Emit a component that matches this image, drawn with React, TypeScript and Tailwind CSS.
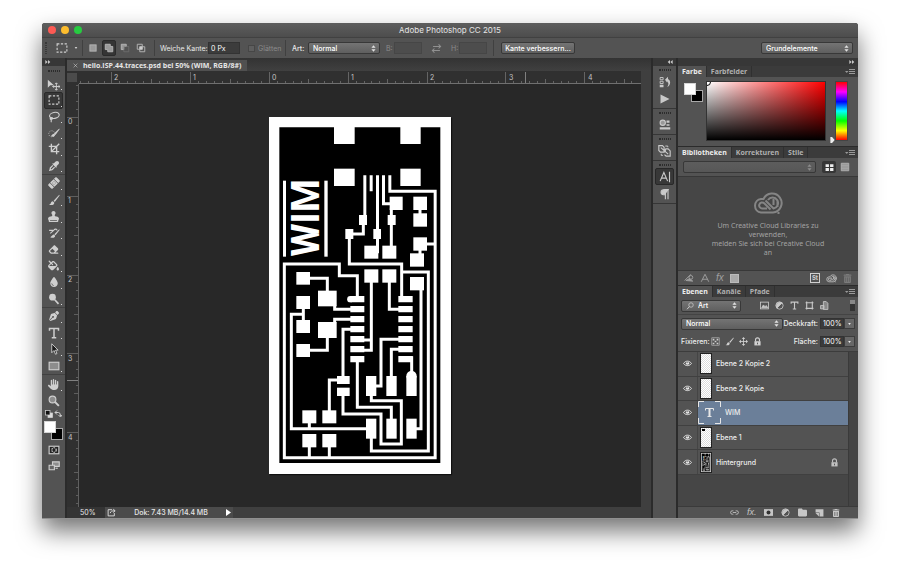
import { ReactNode, useId } from 'react';
import {
    FaBandage,
    FaDroplet,
    FaEraser,
    FaEyeDropper,
    FaFillDrip,
    FaFolder,
    FaHand,
    FaPenNib,
    FaStamp,
    FaTrashCan,
} from 'react-icons/fa6';

interface IconProps {
    children: ReactNode;
    className?: string;
}

// 16x16 grid, drawn in the current text colour
function Icon({ children, className = 'size-3' }: IconProps) {
    return (
        <svg
            viewBox="0 0 16 16"
            className={`shrink-0 ${className}`}
            fill="none"
            stroke="currentColor"
            strokeWidth="1.5"
            aria-hidden="true"
        >
            {children}
        </svg>
    );
}

const MarqueeIcon = () => (
    <Icon>
        <rect x="1.5" y="2.5" width="13" height="11" strokeDasharray="3 2" />
    </Icon>
);

const BrushIcon = ({ className = 'size-3' }: { className?: string }) => (
    <Icon className={className}>
        <path d="M15 1 7.5 9 9 10.500 15.500 2z" fill="currentColor" stroke="none" />
        <path d="M6.500 9.500c-2 0-2.500 1.500-3 3-.4 1-1.500 1.500-2.500 1.500 3 1.500 7 1 7.500-2.500z" fill="currentColor" stroke="none" />
    </Icon>
);

const EyeIcon = () => (
    <Icon className="size-[9px]">
        <path d="M1 8c3-5.500 11-5.500 14 0-3 5-11 5-14 0z" strokeWidth="1.600" />
        <circle cx="8" cy="7.500" r="2.800" fill="currentColor" stroke="none" />
        <path d="M6.500 6.500h2" stroke="#444" />
    </Icon>
);

const LockIcon = () => (
    <Icon className="size-[9px]">
        <path d="M4.500 8V5a3.500 3.500 0 0 1 7 0v3" strokeWidth="2" />
        <rect x="2.500" y="7.500" width="11" height="7.500" fill="currentColor" stroke="none" />
        <path d="M8 10v3" stroke="#444" />
    </Icon>
);

const AdjustIcon = ({ className = 'size-[9px]' }: { className?: string }) => (
    <Icon className={className}>
        <circle cx="8" cy="8" r="6.500" />
        <path d="M12.500 3.500a6.500 6.500 0 0 0-9 9z" fill="currentColor" />
    </Icon>
);

const CloudIcon = ({ className }: { className: string }) => (
    <svg viewBox="0 0 30 23" className={className} fill="none" stroke="currentColor" strokeWidth="2" aria-hidden="true">
        <path d="M8 20.500A6.800 6.800 0 0 1 8 7Q9.500 6.800 10.500 7A9.500 9.500 0 1 1 20 20.500Z" />
        <path d="M14 16.500H9A3 3 0 1 1 11.200 11.300L17.500 17.500M12.500 8.500 20.500 16.500A5.500 5.500 0 1 0 15 8M20.500 7v6M24.500 8v7" />
        <path d="M24.500 20h2v2h-2z" fill="currentColor" stroke="none" />
    </svg>
);

interface Tool {
    name: string;
    icon: ReactNode;
    active?: boolean;
    flyout?: boolean;
}

const toolGroups: { height: string; tools: Tool[] }[] = [
    {
        height: 'h-[99px]',
        tools: [
            {
                name: 'Verschieben',
                icon: (
                    <Icon className="size-[13px]">
                        <path d="M1 2v10l3-3h4.500z" fill="currentColor" stroke="none" />
                        <path d="M11.500 6v9M7 10.500h9M10 7.500 11.500 6 13 7.500M10 13.500l1.500 1.500 1.500-1.500M8.500 9 7 10.500 8.500 12M14.500 9l1.500 1.500-1.500 1.500" strokeWidth="1.200" />
                    </Icon>
                ),
            },
            { name: 'Auswahlrechteck', icon: <MarqueeIcon />, active: true },
            {
                name: 'Lasso',
                icon: (
                    <Icon>
                        <ellipse cx="8.500" cy="6" rx="6.500" ry="4" transform="rotate(-12 8 6)" />
                        <path d="M4 9c-2 1-1 3 1 2s1-3-1-2c0 3 1 4 0 6" />
                    </Icon>
                ),
            },
            {
                name: 'Schnellauswahl',
                icon: (
                    <Icon>
                        <path d="M15 2 8 8.500l2 2L15.500 3zM8 9c-2 0-2.500 2-4 3 2 1.500 5 1 5.500-1.500z" fill="currentColor" stroke="none" />
                        <circle cx="5" cy="9" r="4" strokeDasharray="1.500 1.500" strokeWidth="1" />
                    </Icon>
                ),
            },
            {
                name: 'Freistellen',
                icon: (
                    <Icon>
                        <path d="M4.500 1v10.500H15M1 4.500h10.500V15M4.500 11.500 15 1" strokeWidth="1.800" />
                    </Icon>
                ),
            },
            { name: 'Pipette', icon: <FaEyeDropper className="size-2.5" /> },
        ],
    },
    {
        height: 'h-[133px]',
        tools: [
            {
                name: 'Bereichsreparatur',
                icon: (
                    <span className="-rotate-45">
                        <FaBandage className="size-3" />
                    </span>
                ),
            },
            { name: 'Pinsel', icon: <BrushIcon /> },
            { name: 'Kopierstempel', icon: <FaStamp className="size-[11px]" /> },
            {
                name: 'Protokollpinsel',
                icon: (
                    <Icon>
                        <path d="M15 3 8.500 9.500 10 11l5.500-7zM8 10c-2 0-2.500 2-5 3.500 3 1.500 6.500 1 6.500-2z" fill="currentColor" stroke="none" />
                        <path d="M1.500 4.500h6L3 8.500M8 3.500c3-1.500 4 0 4 1" />
                    </Icon>
                ),
            },
            { name: 'Radiergummi', icon: <FaEraser className="size-[11px]" /> },
            { name: 'Füllwerkzeug', icon: <FaFillDrip className="size-[11px]" /> },
            { name: 'Weichzeichner', icon: <FaDroplet className="size-2.5" /> },
            {
                name: 'Abwedler',
                icon: (
                    <Icon>
                        <circle cx="6" cy="5.500" r="4.500" fill="currentColor" stroke="none" />
                        <path d="m9 9 5 5.500" strokeWidth="2.200" />
                    </Icon>
                ),
            },
        ],
    },
    {
        height: 'h-[67px]',
        tools: [
            { name: 'Zeichenstift', icon: <FaPenNib className="size-2.5" /> },
            {
                name: 'Text',
                icon: (
                    <Icon>
                        <path d="M2 5V2h12v3M8 2v12M5 14.200h6" strokeWidth="2" />
                    </Icon>
                ),
            },
            {
                name: 'Pfadauswahl',
                icon: (
                    <Icon>
                        <path d="M5 1v12l3-3 2 5 2-1-2-4.500h3.500z" fill="#1a1a1a" strokeWidth="1.200" />
                    </Icon>
                ),
            },
            {
                name: 'Rechteck',
                icon: (
                    <Icon>
                        <rect x="1.500" y="3" width="13" height="10" fill="#8d8d8d" />
                    </Icon>
                ),
            },
        ],
    },
    {
        height: 'h-[34px] pt-px',
        tools: [
            { name: 'Hand', icon: <FaHand className="size-[11px]" /> },
            {
                name: 'Zoom',
                flyout: false,
                icon: (
                    <Icon>
                        <circle cx="6" cy="6" r="4.500" fill="#8d8d8d" />
                        <path d="m9.500 9.500 5 5" strokeWidth="2.600" />
                    </Icon>
                ),
            },
        ],
    },
];

function Grip() {
    return <div className="mx-auto h-[2px] w-3 border-y border-dotted border-[#2c2c2c]" />;
}

interface SelectFieldProps {
    label: string;
    value: string;
    className: string;
    disabled?: boolean;
    children?: ReactNode;
}

function SelectField({ label, value, className, disabled, children }: SelectFieldProps) {
    return (
        <div
            className={`relative flex h-3 items-center rounded-[2px] border border-[#383838] bg-linear-to-b ${
                disabled ? 'from-[#5d5d5d] to-[#575757]' : 'from-[#747474] to-[#5f5f5f]'
            } ${className}`}
        >
            {children}
            <select
                aria-label={label}
                disabled={disabled}
                className="h-full w-full appearance-none bg-transparent pl-1 text-[7px] font-medium leading-none text-white outline-none"
            >
                <option>{value}</option>
            </select>
            <svg viewBox="0 0 6 8" className="pointer-events-none absolute right-[3px] h-[7px] w-[5px]" aria-hidden="true">
                <path d="M3 0 5.500 3h-5zM3 8 .5 5h5z" fill={disabled ? '#8d8d8d' : '#e3e3e3'} />
            </svg>
        </div>
    );
}

function TitleBar() {
    return (
        <header className="flex h-[15px] items-center border-b border-[#414141] bg-linear-to-b from-[#5e5e5e] to-[#4d4d4d] px-[6px]">
            <div className="flex flex-1 gap-[5px]">
                <button aria-label="Schließen" className="size-2 rounded-full bg-[#fc5a54]" />
                <button aria-label="Minimieren" className="size-2 rounded-full bg-[#fdbd2e]" />
                <button aria-label="Vollbild" className="size-2 rounded-full bg-[#27cb41]" />
            </div>
            <h1 className="text-[8px] leading-none text-[#e6e6e6]">Adobe Photoshop CC 2015</h1>
            <div className="flex-1" />
        </header>
    );
}

function Separator() {
    return <div className="h-4 w-px bg-[#404040]" />;
}

function OptionsBar() {
    const id = useId();
    return (
        <div className="flex h-5 items-center bg-[#535353] text-[7px] leading-none text-[#e8e8e8]">
            <div className="ml-[3px] h-3 w-[2px] border-x border-dotted border-[#383838]" />
            <button aria-label="Auswahlrechteck-Werkzeug" className="ml-[9px] flex items-center gap-[6px] text-[#d0d0d0]">
                <MarqueeIcon />
                <svg viewBox="0 0 4 3" className="h-[2px] w-1" fill="currentColor">
                    <path d="M0 0h4L2 3z" />
                </svg>
            </button>
            <div className="ml-1 mr-[3px]">
                <Separator />
            </div>
            <div className="flex items-center gap-[2px] text-[#b5b5b5]">
                <button aria-label="Neue Auswahl" className="flex h-4 w-[14px] items-center justify-center">
                    <Icon className="size-[10px]">
                        <rect x="3" y="3" width="10" height="10" fill="#9a9a9a" />
                    </Icon>
                </button>
                <button aria-label="Der Auswahl hinzufügen" aria-pressed="true" className="flex h-4 w-[14px] items-center justify-center rounded-[2px] border border-[#2b2b2b] bg-[#353535]">
                    <Icon className="size-[10px]">
                        <path d="M2 2h8v3.500h4V14H6v-3.500H2z" fill="#9a9a9a" />
                    </Icon>
                </button>
                <button aria-label="Von Auswahl subtrahieren" className="flex h-4 w-[14px] items-center justify-center">
                    <Icon className="size-[10px]">
                        <path d="M2 2h8v3.500H6v5H2z" fill="#9a9a9a" />
                        <path d="M6 5.500h8V14H6z" strokeWidth="1" stroke="#777" />
                    </Icon>
                </button>
                <button aria-label="Schnittmenge bilden" className="flex h-4 w-[14px] items-center justify-center">
                    <Icon className="size-[10px]">
                        <path d="M2 2h8v8H2zM6 6h8v8H6z" />
                        <path d="M6 6h4v4H6z" fill="#ddd" />
                    </Icon>
                </button>
            </div>
            <div className="ml-1.5 mr-[5px]">
                <Separator />
            </div>
            <label htmlFor={`${id}-feather`} className="w-12 shrink-0 whitespace-nowrap">Weiche Kante:</label>
            <input
                id={`${id}-feather`}
                defaultValue="0 Px"
                className="h-3 w-8 border border-[#333] bg-[#3c3c3c] pl-[2px] text-[7px] text-white outline-none"
            />
            <label className="ml-2 flex w-[37px] items-center gap-[3px] text-[#8b8b8b]">
                <input type="checkbox" disabled className="size-[7px] shrink-0 appearance-none border border-[#464646] bg-[#5e5e5e]" />
                Glätten
            </label>
            <Separator />
            <span className="ml-[6px] mr-[4px] w-3 font-medium">Art:</span>
            <SelectField label="Art" value="Normal" className="w-[72px]" />
            <label htmlFor={`${id}-w`} className="ml-1.5 w-2 text-[#8b8b8b]">B:</label>
            <input id={`${id}-w`} disabled className="h-3 w-7 border border-[#464646] bg-[#4d4d4d]" />
            <button aria-label="Höhe und Breite vertauschen" className="mx-[9px] text-[#909090]">
                <Icon className="size-[11px]">
                    <path d="M3 5h11M11 2l3 3-3 3M13 11H2M5 8l-3 3 3 3" />
                </Icon>
            </button>
            <label htmlFor={`${id}-h`} className="w-2 text-[#8b8b8b]">H:</label>
            <input id={`${id}-h`} disabled className="h-3 w-7 border border-[#464646] bg-[#4d4d4d]" />
            <div className="ml-1.5 mr-[7px]">
                <Separator />
            </div>
            <button className="h-3 w-[74px] rounded-[2px] border border-[#383838] bg-linear-to-b from-[#747474] to-[#5f5f5f] font-medium text-white">
                Kante verbessern...
            </button>
            <div className="flex-1" />
            <SelectField label="Arbeitsbereich" value="Grundelemente" className="mr-[5px] w-[92px]" />
        </div>
    );
}

function Toolbar() {
    return (
        <aside className="flex w-[23px] shrink-0 flex-col bg-[#535353] text-[#cfcfcf]">
            <CollapseStrip />
            <div className="py-1">
                <Grip />
            </div>
            {toolGroups.map((group, index) => (
                <div
                    key={index}
                    className={`flex shrink-0 flex-col ${index < toolGroups.length - 1 ? 'border-b border-[#414141]' : ''} ${group.height}`}
                >
                    {group.tools.map((tool) => (
                        <button
                            key={tool.name}
                            aria-label={tool.name}
                            className={`relative mx-[2px] flex flex-1 items-center justify-center rounded-[2px] border ${
                                tool.active ? 'border-[#2a2a2a] bg-[#383838]' : 'border-transparent'
                            }`}
                        >
                            {tool.icon}
                            {tool.flyout !== false && (
                                <span className="absolute bottom-px right-0 size-px bg-[#dcdcdc]" />
                            )}
                        </button>
                    ))}
                </div>
            ))}
            <div className="flex items-center justify-between px-[3px] pb-[3px] pt-px">
                <button aria-label="Standardfarben">
                    <Icon className="size-2">
                        <rect x="6" y="6" width="9" height="9" fill="#ddd" />
                        <rect x="1" y="1" width="9" height="9" fill="#111" />
                    </Icon>
                </button>
                <button aria-label="Farben vertauschen">
                    <Icon className="size-2">
                        <path d="M6 1 2 5l4 4M2 5h7q4 0 4 7M9 10l4 4 3-4" strokeWidth="2" />
                    </Icon>
                </button>
            </div>
            <div className="px-[2px]">
                <ColorSwatches />
            </div>
            <div className="mt-1 flex flex-col items-center gap-1">
                <button aria-label="Maskierungsmodus">
                    <Icon>
                        <rect x="1.500" y="3" width="13" height="10" fill="#222" />
                        <circle cx="8" cy="8" r="3" strokeDasharray="2 1" />
                    </Icon>
                </button>
                <button aria-label="Bildschirmmodus">
                    <Icon>
                        <path d="M6 2.500h9v6H6z" fill="#8d8d8d" />
                        <path d="M1.500 7h7v6h-7z" fill="#666" />
                        <path d="M10 11h3" />
                    </Icon>
                </button>
            </div>
        </aside>
    );
}

function ColorSwatches() {
    return (
        <div className="relative h-[19px] w-[19px]">
            <button aria-label="Hintergrundfarbe" className="absolute bottom-0 right-0 size-3 border border-[#a8a8a8] bg-black" />
            <button aria-label="Vordergrundfarbe" className="absolute left-0 top-0 size-3 border border-[#d5d5d5] bg-white" />
        </div>
    );
}

interface CollapseStripProps {
    className?: string;
    arrowClass?: string;
}

function CollapseStrip({ className = '', arrowClass = '' }: CollapseStripProps) {
    return (
        <div className={`flex h-2 shrink-0 items-center bg-[#373737] px-[3px] ${className}`}>
            <button aria-label="Bedienfelder umschalten" className={arrowClass}>
                <svg viewBox="0 0 8 6" className="h-1 w-[6px]" fill="#c9c9c9">
                    <path d="M0 0l3.500 3L0 6zM4 0l3.500 3L4 6z" />
                </svg>
            </button>
        </div>
    );
}

const TICK = 7.88;

function HorizontalRuler() {
    // the zero mark sits 190px right of the canvas edge
    const ticks = Array.from({ length: 71 }, (_, i) => i - 24);
    return (
        <svg className="h-[13px] w-full min-w-0 flex-1" aria-hidden="true">
            <path d="M0 12.500H2000" stroke="#707070" />
            {ticks.map((n) => {
                const x = Math.round(190 + n * TICK) + 0.5;
                const top = n % 10 === 0 ? 1 : n % 5 === 0 ? 8 : 10;
                return <path key={n} d={`M${x} ${top}V12`} stroke="#646464" />;
            })}
            <path d="M446.500 1V12" stroke="#808080" />
            {[-2, -1, 0, 1, 2, 3, 4].map((n) => (
                <text key={n} x={193 + n * 79} y="9" fontSize="7" fill="#c4c4c4">
                    {Math.abs(n)}
                </text>
            ))}
        </svg>
    );
}

function VerticalRuler() {
    const ticks = Array.from({ length: 54 }, (_, i) => i - 4);
    return (
        <svg className="w-3 shrink-0 bg-[#303030]" aria-hidden="true">
            <path d="M11.500 0V2000" stroke="#606060" />
            {ticks.map((n) => {
                const y = Math.round(33 + n * TICK) + 0.5;
                const left = n % 10 === 0 ? 0 : n % 5 === 0 ? 7 : 9;
                return <path key={n} d={`M${left} ${y}H11`} stroke="#5e5e5e" />;
            })}
            <path d="M0 296.500H11" stroke="#808080" />
            {[0, 1, 2, 3, 4].map((n) => (
                <text key={n} x="1" y={40 + n * 79} fontSize="7" fill="#c4c4c4">
                    {n}
                </text>
            ))}
        </svg>
    );
}

// [x, y, width, height]
const pads = [
    [222, 50, 62, 52], [421, 50, 61, 52], [222, 176, 62, 52], [421, 176, 61, 52],
    [69, 212, 9, 228], [193, 212, 10, 228],
    [389, 260, 39, 40], [383, 315, 24, 30], [367, 407, 42, 39], [313, 407, 42, 39],
    [340, 357, 23, 30], [297, 315, 24, 30], [256, 357, 24, 30],
    [460, 260, 41, 40], [460, 310, 41, 40], [460, 382, 41, 40], [450, 430, 42, 40],
    [313, 478, 42, 40], [367, 478, 42, 40], [450, 501, 42, 40],
    [109, 486, 41, 38], [174, 542, 56, 47], [109, 558, 41, 39], [109, 630, 41, 39],
    [174, 636, 56, 48], [109, 702, 41, 39],
    [318, 798, 31, 60], [379, 798, 31, 60], [439, 798, 31, 60],
    [231, 798, 38, 24], [231, 833, 38, 25],
    [127, 901, 42, 39], [187, 901, 42, 39], [127, 972, 42, 40], [187, 972, 42, 40],
    [318, 926, 31, 60], [379, 926, 31, 60], [439, 926, 31, 60],
];

const traces = [
    'M389.500 196V244H525.500V1043H73V462H238V497H292V565',
    'M314.500 196V320M333.500 196V244M352.500 196V430M370.500 196V281H395',
    'M394 295V410M310 340V372H275M268 380V462H425V565',
    'M429 486H505V1023H334V980',
    'M480 295V315M495 402H525M480 420V435',
    'M334 515V721H310M388 515V598H418M483 540V956H465',
    'M150 505H202V545M130 595V632M130 613H94V956H320',
    'M146 721H202V680M224 585V598H274M224 640V628H274',
    'M274 658H249V800M310 690H334M292 755V892H394V930',
    'M418 688H363V828H345M418 718H394V800M440 743H455V795',
    'M334 855V872H424V1002H363V912H249V855M235 810H208V905',
    'M148 938V956M148 1010V1043M208 1010V1043',
];

function CircuitBoard({ className }: { className: string }) {
    return (
        <svg viewBox="27 21 546 1071" className={className} role="img" aria-label="Leiterplatte">
            <path d="M27 21h546v1071H27z" fill="#fff" />
            <path d="M58 52h483v1007H58z" fill="#000" />
            <g fill="#fff">
                {pads.map(([x, y, width, height]) => (
                    <rect key={`${x}-${y}`} x={x} y={y} width={width} height={height} />
                ))}
                {[558, 588, 618, 648, 678, 708, 738].map((y) => (
                    <path key={y} d={`M271 ${y}h42v19h-42zM415 ${y}h43v19h-43z`} />
                ))}
                <circle cx="271" cy="567.500" r="9.500" />
                <circle cx="454.500" cy="798" r="15.500" />
            </g>
            <path d={traces.join('')} fill="none" stroke="#fff" strokeWidth="9" />
            <text transform="translate(178 440) rotate(-90)" fontSize="114" fill="#fff" className="font-['Roboto'] font-bold">
                WIM
            </text>
        </svg>
    );
}

function DocumentArea() {
    return (
        <main className="flex min-w-0 flex-1 flex-col bg-[#303030]">
            <div className="flex h-[13px] items-end bg-linear-to-b from-[#333] to-[#404040]">
                <div className="flex h-[11px] items-center gap-[5px] bg-[#505050] px-[6px] font-['Open_Sans'] text-[7px] font-bold leading-none text-[#e6e6e6]">
                    <button aria-label="Dokument schließen">
                        <Icon className="size-[5px]">
                            <path d="m2 2 12 12M14 2 2 14" />
                        </Icon>
                    </button>
                    <span>hello.ISP.44.traces.psd bei 50% (WIM, RGB/8#)</span>
                </div>
            </div>
            <div className="flex min-h-0 flex-1">
                <div className="flex min-w-0 flex-1 flex-col">
                    <div className="flex h-[13px]">
                        <div className="w-3 pb-[2px] pt-[2px] pr-[2px]">
                            <div className="h-full bg-[#4b4b4b]" />
                        </div>
                        <HorizontalRuler />
                    </div>
                    <div className="flex min-h-0 flex-1">
                        <VerticalRuler />
                        <div className="flex flex-1 items-center justify-center bg-[#282828]">
                            <CircuitBoard className="h-[357px] w-[182px] shadow-[1px_1px_1px_#111]" />
                        </div>
                    </div>
                </div>
                <div className="w-[10px] bg-[#3f3f3f]" />
            </div>
            <footer className="flex h-[11px] items-center bg-[#3f3f3f] text-[7px] leading-none text-[#e8e8e8]">
                <div className="flex h-full w-[38px] items-center bg-[#343434] pl-[13px]">50%</div>
                <div className="flex h-full w-[128px] items-center justify-between bg-[#4b4b4b] px-[2px]">
                    <button aria-label="Bereitstellen">
                        <Icon className="size-[9px]">
                            <path d="M9 3H2v11h11V9M6 9c0-3 2-4 8-4M11 2l3.500 3L11 8" />
                        </Icon>
                    </button>
                    <span className="font-medium">Dok: 7.43 MB/14.4 MB</span>
                    <button aria-label="Statusoptionen">
                        <svg viewBox="0 0 5 7" className="h-[7px] w-[5px]" fill="#fff">
                            <path d="M0 0l5 3.500L0 7z" />
                        </svg>
                    </button>
                </div>
            </footer>
        </main>
    );
}

function DockGroup({ children }: { children: ReactNode }) {
    return (
        <div className="border-b border-[#363636] px-[2px] pb-px pt-[3px]">
            <Grip />
            <div className="pt-[2px]">{children}</div>
        </div>
    );
}

function DockColumn() {
    const button = 'flex h-[17px] w-full items-center justify-center';
    return (
        <nav className="flex w-[23px] shrink-0 flex-col bg-[#535353] text-[#c9c9c9]">
            <CollapseStrip className="justify-end" arrowClass="rotate-180" />
            <DockGroup>
                <button aria-label="Protokoll" className={button}>
                    <Icon>
                        <path d="M1.500 2h4v3h-4zM1.500 7h4v3h-4z" strokeWidth="1.200" />
                        <path d="M1 11.500h5V15H1z" fill="currentColor" stroke="none" />
                        <path d="M8 5l4-4v3c4 2 4 8-1 11 2-4 2-6 0-8v2z" fill="currentColor" stroke="none" />
                    </Icon>
                </button>
                <button aria-label="Aktionen" className={button}>
                    <Icon>
                        <path d="M2 2l12 6-12 6z" fill="currentColor" stroke="none" />
                    </Icon>
                </button>
            </DockGroup>
            <DockGroup>
                <button aria-label="Eigenschaften" className={button}>
                    <Icon>
                        <circle cx="5" cy="5" r="3.500" fill="#999" />
                        <path d="M10 2h4v3h-4zM10 7h4v2h-4z" fill="currentColor" stroke="none" />
                        <path d="M1 11h14v3H1z" fill="currentColor" stroke="none" />
                    </Icon>
                </button>
            </DockGroup>
            <DockGroup>
                <button aria-label="Kopierquelle" className={button}>
                    <Icon className="size-[13px]">
                        <path d="M1 2h4.500l2 2v6H3L1 8zM9 6h3.500L15 8.500V15h-5L8 13M3.500 4.500l9 8M9 6v4" strokeWidth="1.400" />
                        <path d="M9 2.500h3V4M4 12v2h2" strokeWidth="1.200" />
                    </Icon>
                </button>
            </DockGroup>
            <DockGroup>
                <button aria-label="Zeichen" aria-pressed="true" className={`${button} rounded-[2px] border border-[#282828] bg-[#383838]`}>
                    <Icon>
                        <path d="M1.500 13.500 6.500 2l5 11.500M3.500 9.500h6M14 1v14" />
                    </Icon>
                </button>
                <button aria-label="Absatz" className={button}>
                    <Icon>
                        <path d="M8 9C1 9 1 2 8 2h5" fill="currentColor" />
                        <path d="M8.500 2v13M12 2v13" />
                    </Icon>
                </button>
            </DockGroup>
        </nav>
    );
}

function PanelTabs({ tabs }: { tabs: string[] }) {
    return (
        <div className="flex h-[11px] shrink-0 items-stretch bg-[#3b3b3b] font-['Open_Sans'] text-[7px] font-bold leading-none" role="tablist">
            {tabs.map((tab, index) => (
                <button
                    key={tab}
                    role="tab"
                    aria-selected={index === 0}
                    className={`border-r border-[#303030] px-1 ${index === 0 ? 'bg-[#535353] text-[#ededed]' : 'text-[#b0b0b0]'}`}
                >
                    {tab}
                </button>
            ))}
            <button aria-label="Bedienfeldmenü" className="ml-auto pr-[3px] text-[#999]">
                <svg viewBox="0 0 10 6" className="h-[6px] w-[10px]">
                    <path d="M0 2h3.500L1.800 4z" fill="currentColor" />
                    <path d="M4 .5h6M4 2.500h6M4 4.500h6" stroke="currentColor" />
                </svg>
            </button>
        </div>
    );
}

function ColorPanel() {
    return (
        <section className="bg-[#535353]">
            <PanelTabs tabs={['Farbe', 'Farbfelder']} />
            <div className="flex h-[69px] items-start pl-[6px] pr-[10px] pt-1">
                <div className="pt-[2px]">
                    <ColorSwatches />
                </div>
                <div className="relative ml-[3px] h-[60px] flex-1 overflow-hidden border border-[#333] bg-[linear-gradient(to_top,#000,transparent),linear-gradient(to_right,#fff,#f00)]">
                    <div className="absolute -left-1 -top-1 size-2 rounded-full border border-black bg-white/60" />
                </div>
                <div className="flex w-[9px] justify-end pt-14">
                    <svg viewBox="0 0 5 7" className="h-[6px] w-[5px]" fill="#eee">
                        <path d="M0 0h2l3 3.500L2 7H0z" />
                    </svg>
                </div>
                <div className="h-[60px] w-[13px] border border-[#444] bg-[linear-gradient(to_bottom,#f00,#f0f_17%,#00f_34%,#0ff_50%,#0f0_67%,#ff0_84%,#f00)]" />
            </div>
        </section>
    );
}

function LibrariesPanel() {
    return (
        <section className="bg-[#535353]">
            <PanelTabs tabs={['Bibliotheken', 'Korrekturen', 'Stile']} />
            <div className="flex h-[18px] items-center pl-[5px] pr-[8px]">
                <SelectField label="Bibliothek" value="" disabled className="min-w-0 flex-1" />
                <button aria-label="Rasteransicht" className="ml-[6px] flex h-3 w-[14px] items-center justify-center rounded-[2px] bg-[#363636]">
                    <Icon className="size-[9px]">
                        <path d="M1 2h6v5H1zM9 2h6v5H9zM1 9h6v5H1zM9 9h6v5H9z" fill="#eee" stroke="none" />
                    </Icon>
                </button>
                <button aria-label="Listenansicht" className="ml-1 text-[#b0b0b0]">
                    <Icon className="size-[10px]">
                        <path d="M2 2h12v12H2z" fill="#999" />
                        <path d="M2 6h12M2 10h12" strokeWidth="1" />
                    </Icon>
                </button>
            </div>
            <div className="flex h-[95px] flex-col items-center border-y border-[#383838] bg-[#464646] pt-[15px] text-[#a3a3a3]">
                <CloudIcon className="h-[23px] w-[30px] text-[#858585]" />
                <p className="mt-[6px] w-[120px] text-center font-['Noto_Sans'] text-[7px] leading-[9px]">
                    Um Creative Cloud Libraries zu verwenden,
                    <br />
                    melden Sie sich bei Creative Cloud an
                </p>
            </div>
            <div className="flex h-[14px] items-center gap-[6px] px-[6px] text-[#9f9f9f]">
                <button aria-label="Grafik hinzufügen">
                    <Icon className="size-[10px]">
                        <path d="M1 12 11 2M3 12l6-3 5 4z" fill="currentColor" />
                        <circle cx="11" cy="7" r="3" />
                    </Icon>
                </button>
                <button aria-label="Zeichenformat hinzufügen">
                    <Icon className="size-[10px]">
                        <path d="M2 14 8 2l6 12M4 10h8" />
                    </Icon>
                </button>
                <button aria-label="Ebenenstil hinzufügen" className="font-['Liberation_Sans'] text-[10px] italic leading-none">fx</button>
                <button aria-label="Farbe hinzufügen" className="size-[9px] border border-[#bbb] bg-[#aaa]" />
                <button aria-label="Adobe Stock" className="ml-auto flex size-[10px] items-center justify-center border border-[#d0d0d0] text-[6px] font-bold leading-none text-[#d0d0d0]">
                    St
                </button>
                <button aria-label="Creative Cloud" className="text-[#d0d0d0]">
                    <CloudIcon className="h-[9px] w-[11px]" />
                </button>
                <button aria-label="Aus Bibliothek löschen" className="text-[#7b7b7b]">
                    <FaTrashCan className="size-[9px]" />
                </button>
            </div>
        </section>
    );
}

function PercentField({ label }: { label: string }) {
    const id = useId();
    return (
        <div className="ml-auto flex items-center">
            <label htmlFor={id} className="mr-[2px] font-medium">{label}</label>
            <input
                id={id}
                defaultValue="100%"
                className="h-[11px] w-6 border border-[#333] bg-[#3a3a3a] pl-[2px] text-[7px] text-white outline-none"
            />
            <button aria-label={`${label} Regler`} className="flex h-[11px] w-[11px] items-center justify-center border border-[#3c3c3c] bg-[#676767]">
                <svg viewBox="0 0 4 3" className="h-[2px] w-[3px]" fill="#eee">
                    <path d="M0 0h4L2 3z" />
                </svg>
            </button>
        </div>
    );
}

const checker = 'bg-white bg-[repeating-conic-gradient(#dcdcdc_0_25%,#fff_0_50%)] bg-size-[2px_2px]';

const layers = [
    { name: 'Ebene 2 Kopie 2', kind: 'pixel' },
    { name: 'Ebene 2 Kopie', kind: 'pixel' },
    { name: 'WIM', kind: 'text' },
    { name: 'Ebene 1', kind: 'marked' },
    { name: 'Hintergrund', kind: 'background' },
];

function LayerThumb({ kind }: { kind: string }) {
    if (kind === 'text') {
        return (
            <svg viewBox="0 0 23 23" className="size-[23px]" fill="none" stroke="#e6e6e6" aria-hidden="true">
                <path d="M.5 6V.5H6M17 .5h5.500V6M22.500 17v5.500H17M6 22.500H.5V17" />
                <path d="M7.500 9.500v-2h8v2M9.500 15.500h4" />
                <path d="M11.500 7.500v8" strokeWidth="2" />
            </svg>
        );
    }
    return (
        <div className="ml-[2px] mr-[4px] h-[21px] w-3 border border-[#222]">
            {kind === 'background' ? (
                <CircuitBoard className="h-full w-full" />
            ) : (
                <div className={`h-full pl-px pt-px ${checker}`}>
                    {kind === 'marked' && <div className="h-[2px] w-[3px] bg-black" />}
                </div>
            )}
        </div>
    );
}

function LayersPanel() {
    return (
        <section className="flex min-h-0 flex-1 flex-col bg-[#535353] text-[7px] leading-none text-[#ececec]">
            <PanelTabs tabs={['Ebenen', 'Kanäle', 'Pfade']} />
            <div className="flex h-[18px] shrink-0 items-center border-b border-[#444] pl-[3px] pr-[3px] text-[#c9c9c9]">
                <SelectField label="Filtertyp" value="Art" className="w-[60px] pl-1">
                    <Icon className="size-[8px]">
                        <circle cx="10" cy="6" r="4.500" />
                        <path d="m7 9-5 5.500" strokeWidth="2" />
                    </Icon>
                </SelectField>
                <div className="ml-[19px] flex items-center gap-[6px]">
                    <button aria-label="Pixelebenen">
                        <Icon className="size-[9px]">
                            <rect x="1" y="2" width="14" height="12" />
                            <path d="M3 12l3-5 3 3 2-2 3 4z" fill="currentColor" />
                        </Icon>
                    </button>
                    <button aria-label="Einstellungsebenen">
                        <AdjustIcon />
                    </button>
                    <button aria-label="Textebenen">
                        <Icon className="size-[9px]">
                            <path d="M2 5V2h12v3M8 2v12M5 14.200h6" strokeWidth="2" />
                        </Icon>
                    </button>
                    <button aria-label="Formebenen">
                        <Icon className="size-[9px]">
                            <path d="M3 1v14M13 1v14M1 3h14M1 13h14" strokeWidth="2" />
                        </Icon>
                    </button>
                    <button aria-label="Smartobjekte">
                        <Icon className="size-[9px]">
                            <path d="M6 1h5l3 3v11H6zM1 8h6v6H1z" fill="#888" />
                        </Icon>
                    </button>
                </div>
                <button aria-label="Filter ein/aus" className="ml-auto h-[11px] w-[5px] bg-[#333]">
                    <div className="h-1 bg-[#888]" />
                    <div className="h-[7px]" />
                </button>
            </div>
            <div className="flex h-[17px] shrink-0 items-center pl-[3px] pr-[3px]">
                <SelectField label="Füllmethode" value="Normal" className="w-[102px]" />
                <PercentField label="Deckkraft:" />
            </div>
            <div className="flex h-5 shrink-0 items-center border-b border-[#3c3c3c] pl-[3px] pr-[3px]">
                <span className="font-medium">Fixieren:</span>
                <div className="ml-px flex items-center gap-[5px] text-[#d0d0d0]">
                    <button aria-label="Transparente Pixel fixieren">
                        <Icon className="size-[9px]">
                            <rect x="1.500" y="1.500" width="13" height="13" strokeWidth="1" />
                            <path d="M3 3h3v3H3zM10 3h3v3h-3zM6.500 6.500h3v3h-3zM3 10h3v3H3zM10 10h3v3h-3z" fill="currentColor" stroke="none" />
                        </Icon>
                    </button>
                    <button aria-label="Bildpixel fixieren">
                        <BrushIcon className="size-[9px]" />
                    </button>
                    <button aria-label="Position fixieren">
                        <Icon className="size-[9px]">
                            <path d="M8 2v12M2 8h12" />
                            <path d="M8 0l3 3.500H5zM8 16l3-3.500H5zM0 8l3.500-3v6zM16 8l-3.500-3v6z" fill="currentColor" stroke="none" />
                        </Icon>
                    </button>
                    <button aria-label="Alle fixieren">
                        <LockIcon />
                    </button>
                </div>
                <PercentField label="Fläche:" />
            </div>
            <div className="flex min-h-0 flex-1 bg-[#464646]">
                <ul className="grid h-[123px] flex-1 grid-rows-5">
                    {layers.map((layer) => (
                        <li
                            key={layer.name}
                            className={`flex items-center border-b border-[#404040] ${layer.kind === 'text' ? 'bg-[#6b7f99]' : 'bg-[#535353]'}`}
                        >
                            <button aria-label={`${layer.name} ein-/ausblenden`} className="flex h-full w-5 items-center justify-center border-r border-[#454545] bg-[#535353]">
                                <EyeIcon />
                            </button>
                            <button className="flex h-full min-w-0 flex-1 items-center text-left font-medium">
                                <LayerThumb kind={layer.kind} />
                                <span className={layer.kind === 'text' ? 'pl-1' : ''}>{layer.name}</span>
                            </button>
                            {layer.kind === 'background' && (
                                <span className="pr-[9px] text-[#c0c0c0]">
                                    <LockIcon />
                                </span>
                            )}
                        </li>
                    ))}
                </ul>
                <div className="w-[10px] border-l border-[#3a3a3a] bg-[#444]" />
            </div>
            <div className="flex h-3 shrink-0 items-center gap-2 border-t border-[#3a3a3a] pl-[52px] text-[#c6c6c6]">
                <button aria-label="Ebenen verbinden">
                    <Icon className="size-[9px]">
                        <path d="M6 5H4a3 3 0 0 0 0 6h2M10 5h2a3 3 0 0 1 0 6h-2M5 8h6" />
                    </Icon>
                </button>
                <button aria-label="Ebenenstil" className="w-[9px] font-['Liberation_Sans'] text-[9px] italic leading-none">fx.</button>
                <button aria-label="Ebenenmaske">
                    <Icon className="size-[9px]">
                        <path d="M0 2h16v12H0z" fill="currentColor" stroke="none" />
                        <circle cx="8" cy="8" r="3.500" fill="#333" stroke="none" />
                    </Icon>
                </button>
                <button aria-label="Einstellungsebene">
                    <AdjustIcon />
                </button>
                <button aria-label="Neue Gruppe">
                    <FaFolder className="size-[9px]" />
                </button>
                <button aria-label="Neue Ebene">
                    <Icon className="size-[9px]">
                        <path d="M1 2h14v13H8V8H1z" fill="currentColor" stroke="none" />
                        <path d="M1 9h6v6z" fill="currentColor" stroke="none" />
                    </Icon>
                </button>
                <button aria-label="Ebene löschen">
                    <FaTrashCan className="size-[8px]" />
                </button>
            </div>
        </section>
    );
}

export default function App() {
    return (
        <div className="flex min-h-screen flex-col bg-white px-[42px] pb-14 pt-[23px] font-['Inter','Liberation_Sans',sans-serif]">
            <div className="flex flex-1 flex-col overflow-hidden rounded-t-[3px] border-b border-[#8f8f8f] bg-[#2b2b2b] shadow-[0_12px_24px_rgba(0,0,0,0.55)]">
                <TitleBar />
                <OptionsBar />
                <div className="flex min-h-0 flex-1 gap-[2px]">
                    <Toolbar />
                    <DocumentArea />
                    <DockColumn />
                    <div className="flex w-[180px] shrink-0 flex-col">
                        <CollapseStrip className="justify-end" />
                        <div className="flex min-h-0 flex-1 flex-col gap-px">
                            <ColorPanel />
                            <LibrariesPanel />
                            <LayersPanel />
                        </div>
                    </div>
                </div>
            </div>
        </div>
    );
}
